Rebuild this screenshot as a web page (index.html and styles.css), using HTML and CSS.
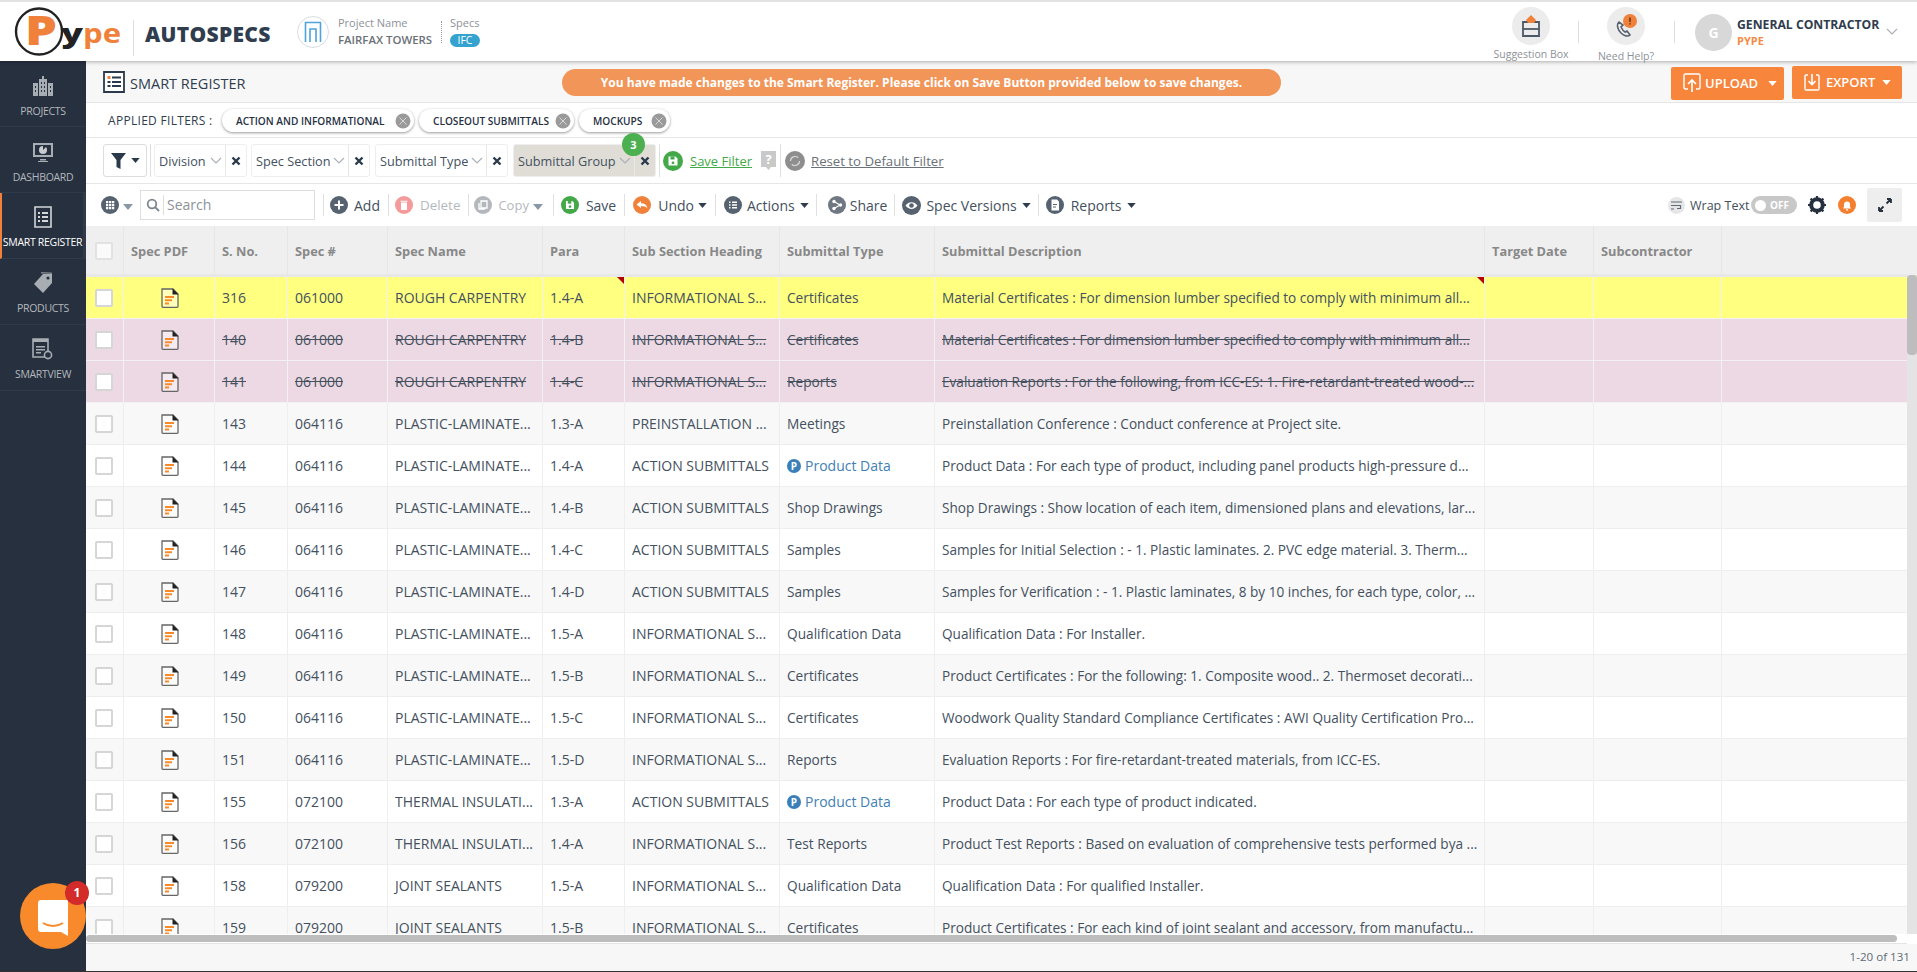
FILE: index.html
```html
<!DOCTYPE html>
<html lang="en">
<head>
<meta charset="utf-8">
<title>Smart Register</title>
<link rel="stylesheet" href="styles.css">
</head>
<body>
<svg class="defs" width="0" height="0" aria-hidden="true">
  <symbol id="pdf" viewBox="0 0 18 20">
    <path d="M1 1h11l5 5v12.5a.8.8 0 0 1-.8.8H1.800a.8.8 0 0 1-.8-.8z" fill="#ffffff" fill-opacity=".45" stroke="#666" stroke-width="1.300"/>
    <path d="M11.500 .5l6 6h-6z" fill="#222"/>
    <path d="M4 8h9v2H4zM4 11.200h7v2H4zM4 14.400h4v2H4z" fill="#f98a2c"/>
  </symbol>
  <symbol id="caret" viewBox="0 0 10 6"><path d="M0 0h10L5 6z"/></symbol>
  <symbol id="chev" viewBox="0 0 12 7"><path d="M1 1l5 5 5-5" fill="none" stroke="#aab0b8" stroke-width="1.200"/></symbol>
  <symbol id="xmark" viewBox="0 0 10 10"><path d="M1.500 1.500l7 7M8.500 1.500l-7 7" stroke="#2b3a4a" stroke-width="2.400"/></symbol>
  <symbol id="chipx" viewBox="0 0 16 16"><circle cx="8" cy="8" r="7.500" fill="#9a9a9a"/><path d="M4.500 4.500l7 7M11.500 4.500l-7 7" stroke="#d8d8d8" stroke-width="1"/></symbol>
  <symbol id="disk" viewBox="0 0 20 20"><circle cx="10" cy="10" r="10" fill="#43a848"/><path d="M5.500 5.500h7l2 2v7h-9z" fill="#fff"/><path d="M7.500 5.500h4v3h-4z" fill="#43a848"/><circle cx="10" cy="11.800" r="1.400" fill="#43a848"/></symbol>
</svg>

<header class="topbar">
  <svg class="logo" width="124" height="56" viewBox="0 0 124 56">
    <circle cx="39" cy="29.500" r="23" fill="#fff" stroke="#222" stroke-width="2.400"/>
    <text class="logo-p" x="25" y="43" textLength="32" lengthAdjust="spacingAndGlyphs">P</text>
    <text class="logo-y" x="61" y="41" textLength="22" lengthAdjust="spacingAndGlyphs">y</text>
    <text class="logo-pe" x="83" y="41" textLength="38" lengthAdjust="spacingAndGlyphs">pe</text>
  </svg>
  <span class="vline logo-sep"></span>
  <span class="brand">AUTOSPECS</span>
  <span class="proj-ico">
    <svg width="18" height="22" viewBox="0 0 18 22"><path d="M1.500 21V1.500h15V21" fill="none" stroke="#4fa3d9" stroke-width="1.600"/><path d="M6 21V8h6v13" fill="none" stroke="#4fa3d9" stroke-width="1.600"/></svg>
  </span>
  <div class="proj">
    <span class="proj-l">Project Name</span>
    <span class="proj-v">FAIRFAX TOWERS</span>
  </div>
  <span class="dotsep"></span>
  <div class="specs">
    <span class="proj-l">Specs</span>
    <span class="ifc">IFC</span>
  </div>
  <div class="top-right">
    <div class="tool tool-s">
      <span class="tool-ico">
        <svg width="22" height="24" viewBox="0 0 22 24"><path d="M3 8h16v14H3z" fill="none" stroke="#4c5866" stroke-width="1.800"/><path d="M3 15h16" stroke="#4c5866" stroke-width="1.800"/><path d="M11 1l5 5-2 3H8L6 6z" fill="#f0813a"/></svg>
      </span>
      <span class="tool-l">Suggestion Box</span>
    </div>
    <span class="vline tool-sep1"></span>
    <div class="tool tool-h">
      <span class="tool-ico">
        <svg width="26" height="26" viewBox="0 0 26 26"><path d="M6 9c-3 3-1 8 2 11s7 4 9 2l-3-4-2 1c-2-1-3-3-4-5l2-2z" fill="none" stroke="#566270" stroke-width="1.600"/><circle cx="17" cy="8" r="7" fill="#f0813a"/><path d="M17 4.500v4.500M17 10.300v1.200" stroke="#5b3418" stroke-width="1.500"/></svg>
      </span>
      <span class="tool-l tool-l2">Need Help?</span>
    </div>
    <span class="vline tool-sep2"></span>
    <span class="avatar">G</span>
    <div class="user">
      <span class="user-n">GENERAL CONTRACTOR</span>
      <span class="user-o">PYPE</span>
    </div>
    <svg class="user-chev" width="12" height="7"><use href="#chev"/></svg>
  </div>
</header>

<div class="shell">
  <nav class="side">
    <a class="nav nav-up">
      <svg width="22" height="22" viewBox="0 0 22 22"><path d="M7 4h8v17H7zM1 8h5v13H1zM16 8h5v13h-5zM10 1h2v3h-2z" fill="#a8adb3"/><path d="M9 7h1v2H9zM12 7h1v2h-1zM9 11h1v2H9zM12 11h1v2h-1zM9 15h1v2H9zM12 15h1v2h-1zM3 11h1v2H3zM3 15h1v2H3zM18 11h1v2h-1zM18 15h1v2h-1z" fill="#26303f"/></svg>
      <span>PROJECTS</span>
    </a>
    <a class="nav nav-up">
      <svg width="22" height="22" viewBox="0 0 22 22"><path d="M1 2h20v14H1z" fill="#a8adb3"/><path d="M3 4h16v10H3z" fill="#26303f"/><path d="M8 18h6v1.500H8zM6 20h10v1H6z" fill="#a8adb3"/><circle cx="11" cy="9" r="4" fill="#c8ccd0"/><path d="M11 9V5h4z" fill="#26303f"/></svg>
      <span>DASHBOARD</span>
    </a>
    <a class="nav nav-on">
      <svg width="18" height="22" viewBox="0 0 18 22"><path d="M1 1h16v20H1z" fill="none" stroke="#d4d6d9" stroke-width="1.600"/><path d="M4 6h2v2H4zM8 6h6v2H8zM4 10h2v2H4zM8 10h6v2H8zM4 14h2v2H4zM8 14h6v2H8z" fill="#d4d6d9"/></svg>
      <span>SMART REGISTER</span>
    </a>
    <a class="nav">
      <svg width="22" height="22" viewBox="0 0 22 22"><path d="M11 2h9v9l-9 10-9-9z" fill="#a8adb3"/><path d="M9 .8l11 .4" stroke="#a8adb3"/><circle cx="16" cy="6" r="1.600" fill="#26303f"/></svg>
      <span>PRODUCTS</span>
    </a>
    <a class="nav">
      <svg width="22" height="22" viewBox="0 0 22 22"><path d="M1 1h15v18H1z" fill="none" stroke="#a8adb3" stroke-width="1.600"/><path d="M1 1h15v3H1z" fill="#a8adb3"/><path d="M4 8h9v1.400H4zM4 11h9v1.400H4zM4 14h5v1.400H4z" fill="#a8adb3"/><circle cx="16" cy="17" r="3.600" fill="#26303f" stroke="#a8adb3" stroke-width="1.600"/></svg>
      <span>SMARTVIEW</span>
    </a>
  </nav>

  <main class="main">
    <div class="titlebar">
      <svg class="title-ico" width="22" height="22" viewBox="0 0 22 22"><path d="M1 1h20v20H1z" fill="#fff" stroke="#2b3a4a" stroke-width="1.800"/><path d="M4.500 5h3v3h-3z" fill="#f0813a"/><path d="M4.500 10h3v2h-3zM4.500 14h3v2h-3zM9 5.500h9v2H9zM9 10h9v2H9zM9 14h9v2H9z" fill="#2b3a4a"/></svg>
      <span class="title">SMART REGISTER</span>
      <div class="banner">You have made changes to the Smart Register. Please click on Save Button provided below to save changes.</div>
      <button class="obtn obtn-u">
        <svg width="18" height="20" viewBox="0 0 18 20"><path d="M5 16H2.500A1.500 1.500 0 0 1 1 14.500v-12A1.500 1.500 0 0 1 2.500 1h13A1.500 1.500 0 0 1 17 2.500v12a1.500 1.500 0 0 1-1.500 1.500H13" fill="none" stroke="#fff" stroke-width="1.400"/><path d="M9 19V7M5 11l4-4 4 4" fill="none" stroke="#fff" stroke-width="1.600"/></svg>
        UPLOAD
        <svg class="obtn-c" width="9" height="5"><use href="#caret"/></svg>
      </button>
      <button class="obtn obtn-e">
        <svg width="16" height="18" viewBox="0 0 16 18"><path d="M4 2H2.200A1.200 1.200 0 0 0 1 3.200v12.600A1.200 1.200 0 0 0 2.200 17h11.600a1.200 1.200 0 0 0 1.200-1.200V3.200A1.200 1.200 0 0 0 13.800 2H12" fill="none" stroke="#fff" stroke-width="1.400"/><path d="M8 1v10M4.500 8L8 11.500 11.500 8" fill="none" stroke="#fff" stroke-width="1.600"/></svg>
        EXPORT
        <svg class="obtn-c" width="9" height="5"><use href="#caret"/></svg>
      </button>
    </div>

    <div class="applied">
      <span class="applied-l">APPLIED FILTERS :</span>
      <span class="chip chip-1">ACTION AND INFORMATIONAL<svg width="16" height="16"><use href="#chipx"/></svg></span>
      <span class="chip chip-2">CLOSEOUT SUBMITTALS<svg width="16" height="16"><use href="#chipx"/></svg></span>
      <span class="chip chip-3">MOCKUPS<svg width="16" height="16"><use href="#chipx"/></svg></span>
    </div>

    <div class="filters">
      <button class="funnel">
        <svg width="15" height="16" viewBox="0 0 15 16"><path d="M0 0h15L9.500 7v9l-4-2V7z" fill="#2b3a4a"/></svg>
        <svg class="funnel-c" width="9" height="5"><use href="#caret"/></svg>
      </button>
      <span class="vline fsep"></span>
      <div class="fgroup fg-div"><span class="fname">Division<svg width="12" height="7"><use href="#chev"/></svg></span><span class="fx"><svg width="10" height="10"><use href="#xmark"/></svg></span></div>
      <div class="fgroup fg-sec"><span class="fname">Spec Section<svg width="12" height="7"><use href="#chev"/></svg></span><span class="fx"><svg width="10" height="10"><use href="#xmark"/></svg></span></div>
      <div class="fgroup fg-typ"><span class="fname">Submittal Type<svg width="12" height="7"><use href="#chev"/></svg></span><span class="fx"><svg width="10" height="10"><use href="#xmark"/></svg></span></div>
      <div class="fgroup fg-grp fg-on"><span class="fname">Submittal Group<svg width="12" height="7"><use href="#chev"/></svg></span><span class="fx"><svg width="10" height="10"><use href="#xmark"/></svg></span><span class="fbadge">3</span></div>
      <span class="vline fsep2"></span>
      <svg class="fi-save" width="20" height="20"><use href="#disk"/></svg>
      <a class="link-save">Save Filter</a>
      <svg class="fi-help" width="15" height="20" viewBox="0 0 15 20"><path d="M0 0h15v16H10l-2.500 3L5 16H0z" fill="#c9c9c9"/><text class="help-q" x="7.500" y="12.500">?</text></svg>
      <span class="vline fsep3"></span>
      <svg class="fi-reset" width="20" height="20" viewBox="0 0 20 20"><circle cx="10" cy="10" r="10" fill="#8e8e8e"/><path d="M5.500 10a4.500 4.500 0 0 1 7.700-3.200M14.500 10a4.500 4.500 0 0 1-7.700 3.200" fill="none" stroke="#d4d4d4" stroke-width="1.300"/></svg>
      <a class="link-reset">Reset to Default Filter</a>
    </div>

    <div class="toolbar">
      <svg class="t-grid" width="18" height="18" viewBox="0 0 18 18"><circle cx="9" cy="9" r="9" fill="#566270"/><path d="M5 5h2.300v2.300H5zM8 5h2.300v2.300H8zM11 5h2.300v2.300H11zM5 8h2.300v2.300H5zM8 8h2.300v2.300H8zM11 8h2.300v2.300H11zM5 11h2.300v2.300H5zM8 11h2.300v2.300H8zM11 11h2.300v2.300H11z" fill="#fff"/></svg>
      <svg class="t-caret t-grid-c" width="10" height="6"><use href="#caret"/></svg>
      <div class="search">
        <svg width="14" height="14" viewBox="0 0 14 14"><circle cx="6" cy="6" r="4.300" fill="none" stroke="#7d8792" stroke-width="1.800"/><path d="M9 9l4 4" stroke="#7d8792" stroke-width="1.800"/></svg>
        <span class="search-t">Search</span>
      </div>
      <span class="tsep ts1"></span>
      <svg class="ti" width="18" height="18" viewBox="0 0 18 18"><circle cx="9" cy="9" r="9" fill="#566270"/><path d="M9 4.500v9M4.500 9h9" stroke="#fff" stroke-width="2"/></svg>
      <span class="tt t-add">Add</span>
      <span class="tsep ts2"></span>
      <svg class="ti" width="18" height="18" viewBox="0 0 18 18"><circle cx="9" cy="9" r="9" fill="#f59a9a"/><path d="M6 6.500h6V14H6zM5.500 4.700h7v1h-7z" fill="#fff"/></svg>
      <span class="tt tt-off t-del">Delete</span>
      <span class="tsep ts3"></span>
      <svg class="ti" width="18" height="18" viewBox="0 0 18 18"><circle cx="9" cy="9" r="9" fill="#b4b8bd"/><path d="M7 5h6v7H7z" fill="none" stroke="#fff" stroke-width="1.300"/><path d="M5 7v6h6" fill="none" stroke="#fff" stroke-width="1.300"/></svg>
      <span class="tt tt-off t-copy">Copy</span>
      <svg class="t-caret t-copy-c" width="10" height="6"><use href="#caret"/></svg>
      <span class="tsep ts4"></span>
      <svg class="ti" width="18" height="18"><use href="#disk"/></svg>
      <span class="tt t-save">Save</span>
      <span class="tsep ts5"></span>
      <svg class="ti" width="18" height="18" viewBox="0 0 18 18"><circle cx="9" cy="9" r="9" fill="#f0813a"/><path d="M3.500 8.500L8 5v2.300c3.500 0 6 1.700 6.500 5.200-1.500-2-3.500-2.600-6.500-2.600V12z" fill="#fff"/></svg>
      <span class="tt t-undo">Undo</span>
      <svg class="t-caret-d t-cu" width="9" height="5"><use href="#caret"/></svg>
      <span class="tsep ts6"></span>
      <svg class="ti" width="18" height="18" viewBox="0 0 18 18"><circle cx="9" cy="9" r="9" fill="#566270"/><path d="M5 5.500h1.500V7H5zM5 8.300h1.500v1.500H5zM5 11h1.500v1.500H5zM8 5.500h5V7H8zM8 8.300h5v1.500H8zM8 11h5v1.500H8z" fill="#fff"/></svg>
      <span class="tt t-act">Actions</span>
      <svg class="t-caret-d" width="9" height="5"><use href="#caret"/></svg>
      <span class="tsep ts7"></span>
      <svg class="ti" width="18" height="18" viewBox="0 0 18 18"><circle cx="9" cy="9" r="9" fill="#6f7782"/><path d="M6 5.500l6 3.500-6 3.500" fill="none" stroke="#fff" stroke-width="1.200"/><circle cx="6" cy="5.500" r="1.700" fill="#fff"/><circle cx="12.500" cy="9" r="1.700" fill="#fff"/><circle cx="6" cy="12.500" r="1.700" fill="#fff"/></svg>
      <span class="tt t-share">Share</span>
      <span class="tsep ts8"></span>
      <svg class="ti" width="19" height="19" viewBox="0 0 19 19"><circle cx="9.500" cy="9.500" r="9.500" fill="#566270"/><path d="M3.500 9.500c3-4.500 9-4.500 12 0-3 4.500-9 4.500-12 0z" fill="#fff"/><circle cx="9.500" cy="9.500" r="2.300" fill="#566270"/></svg>
      <span class="tt t-ver">Spec Versions</span>
      <svg class="t-caret-d" width="9" height="5"><use href="#caret"/></svg>
      <span class="tsep ts9"></span>
      <svg class="ti" width="18" height="18" viewBox="0 0 18 18"><circle cx="9" cy="9" r="9" fill="#566270"/><path d="M5.500 3.500H11l2 2v9H5.500z" fill="#fff"/><path d="M7 8h4v1H7zM7 10.500h3v1H7z" fill="#566270"/></svg>
      <span class="tt t-rep">Reports</span>
      <svg class="t-caret-d" width="9" height="5"><use href="#caret"/></svg>

      <div class="t-right">
        <span class="wrap-ico"><svg width="11" height="9" viewBox="0 0 11 9"><path d="M0 1h11M0 4.500h9.500v3H6M0 8h3" fill="none" stroke="#5f6a76" stroke-width="1.200"/></svg></span>
        <span class="wrap-t">Wrap Text</span>
        <span class="toggle"><span class="knob"></span>OFF</span>
        <svg class="gear" width="18" height="18" viewBox="0 0 18 18"><circle cx="9" cy="9" r="5.800" fill="#fff" stroke="#26303f" stroke-width="4"/><path d="M9 0v3M9 15v3M0 9h3M15 9h3M2.600 2.600l2.200 2.200M13.200 13.200l2.200 2.200M15.400 2.600l-2.200 2.200M4.800 13.200l-2.200 2.200" stroke="#26303f" stroke-width="2.200"/></svg>
        <svg class="bell" width="18" height="18" viewBox="0 0 18 18"><circle cx="9" cy="9" r="9" fill="#f47f2e"/><path d="M5 12.500c1-1 1-2.500 1-4a3 3 0 0 1 6 0c0 1.500 0 3 1 4zM8 13.300h2v1.200H8z" fill="#fff"/></svg>
        <span class="expand"><svg width="14" height="14" viewBox="0 0 14 14"><path d="M8.500 5.500L13 1M13 1H9M13 1v4M5.500 8.500L1 13M1 13h4M1 13V9" fill="none" stroke="#26303f" stroke-width="1.800"/></svg></span>
      </div>
    </div>

    <div class="grid-area">
      <div class="grid-col">
        <div class="grid-clip">
          <table class="grid">
            <colgroup>
              <col class="c-chk"><col class="c-pdf"><col class="c-sno"><col class="c-num"><col class="c-name"><col class="c-para"><col class="c-head"><col class="c-type"><col class="c-desc"><col class="c-date"><col class="c-sub"><col>
            </colgroup>
            <thead>
              <tr><th><span class="chk chk-h"></span></th><th>Spec PDF</th><th>S. No.</th><th>Spec #</th><th>Spec Name</th><th>Para</th><th>Sub Section Heading</th><th>Submittal Type</th><th>Submittal Description</th><th>Target Date</th><th>Subcontractor</th><th></th></tr>
            </thead>
            <tbody>
              <tr class="r-y"><td><span class="chk"></span></td><td class="pdf"><svg width="18" height="20"><use href="#pdf"/></svg></td><td>316</td><td>061000</td><td>ROUGH CARPENTRY</td><td class="flag">1.4-A<i class="tri"></i></td><td>INFORMATIONAL S...</td><td class="ty">Certificates</td><td class="ds">Material Certificates : For dimension lumber specified to comply with minimum all...<i class="tri"></i></td><td></td><td></td><td></td></tr>
              <tr class="r-x"><td><span class="chk"></span></td><td class="pdf"><svg width="18" height="20"><use href="#pdf"/></svg></td><td>140</td><td>061000</td><td>ROUGH CARPENTRY</td><td>1.4-B</td><td>INFORMATIONAL S...</td><td class="ty">Certificates</td><td class="ds">Material Certificates : For dimension lumber specified to comply with minimum all...</td><td></td><td></td><td></td></tr>
              <tr class="r-x"><td><span class="chk"></span></td><td class="pdf"><svg width="18" height="20"><use href="#pdf"/></svg></td><td>141</td><td>061000</td><td>ROUGH CARPENTRY</td><td>1.4-C</td><td>INFORMATIONAL S...</td><td class="ty">Reports</td><td class="ds">Evaluation Reports : For the following, from ICC-ES: 1. Fire-retardant-treated wood-...</td><td></td><td></td><td></td></tr>
              <tr class="r-g"><td><span class="chk"></span></td><td class="pdf"><svg width="18" height="20"><use href="#pdf"/></svg></td><td>143</td><td>064116</td><td>PLASTIC-LAMINATE...</td><td>1.3-A</td><td>PREINSTALLATION ...</td><td class="ty">Meetings</td><td class="ds">Preinstallation Conference : Conduct conference at Project site.</td><td></td><td></td><td></td></tr>
              <tr><td><span class="chk"></span></td><td class="pdf"><svg width="18" height="20"><use href="#pdf"/></svg></td><td>144</td><td>064116</td><td>PLASTIC-LAMINATE...</td><td>1.4-A</td><td>ACTION SUBMITTALS</td><td class="prod"><span class="p-ico">P</span>Product Data</td><td class="ds">Product Data : For each type of product, including panel products high-pressure d...</td><td></td><td></td><td></td></tr>
              <tr class="r-g"><td><span class="chk"></span></td><td class="pdf"><svg width="18" height="20"><use href="#pdf"/></svg></td><td>145</td><td>064116</td><td>PLASTIC-LAMINATE...</td><td>1.4-B</td><td>ACTION SUBMITTALS</td><td class="ty">Shop Drawings</td><td class="ds">Shop Drawings : Show location of each item, dimensioned plans and elevations, lar...</td><td></td><td></td><td></td></tr>
              <tr><td><span class="chk"></span></td><td class="pdf"><svg width="18" height="20"><use href="#pdf"/></svg></td><td>146</td><td>064116</td><td>PLASTIC-LAMINATE...</td><td>1.4-C</td><td>ACTION SUBMITTALS</td><td class="ty">Samples</td><td class="ds">Samples for Initial Selection : - 1. Plastic laminates. 2. PVC edge material. 3. Therm...</td><td></td><td></td><td></td></tr>
              <tr class="r-g"><td><span class="chk"></span></td><td class="pdf"><svg width="18" height="20"><use href="#pdf"/></svg></td><td>147</td><td>064116</td><td>PLASTIC-LAMINATE...</td><td>1.4-D</td><td>ACTION SUBMITTALS</td><td class="ty">Samples</td><td class="ds">Samples for Verification : - 1. Plastic laminates, 8 by 10 inches, for each type, color, ...</td><td></td><td></td><td></td></tr>
              <tr><td><span class="chk"></span></td><td class="pdf"><svg width="18" height="20"><use href="#pdf"/></svg></td><td>148</td><td>064116</td><td>PLASTIC-LAMINATE...</td><td>1.5-A</td><td>INFORMATIONAL S...</td><td class="ty">Qualification Data</td><td class="ds">Qualification Data : For Installer.</td><td></td><td></td><td></td></tr>
              <tr class="r-g"><td><span class="chk"></span></td><td class="pdf"><svg width="18" height="20"><use href="#pdf"/></svg></td><td>149</td><td>064116</td><td>PLASTIC-LAMINATE...</td><td>1.5-B</td><td>INFORMATIONAL S...</td><td class="ty">Certificates</td><td class="ds">Product Certificates : For the following: 1. Composite wood.. 2. Thermoset decorati...</td><td></td><td></td><td></td></tr>
              <tr><td><span class="chk"></span></td><td class="pdf"><svg width="18" height="20"><use href="#pdf"/></svg></td><td>150</td><td>064116</td><td>PLASTIC-LAMINATE...</td><td>1.5-C</td><td>INFORMATIONAL S...</td><td class="ty">Certificates</td><td class="ds">Woodwork Quality Standard Compliance Certificates : AWI Quality Certification Pro...</td><td></td><td></td><td></td></tr>
              <tr class="r-g"><td><span class="chk"></span></td><td class="pdf"><svg width="18" height="20"><use href="#pdf"/></svg></td><td>151</td><td>064116</td><td>PLASTIC-LAMINATE...</td><td>1.5-D</td><td>INFORMATIONAL S...</td><td class="ty">Reports</td><td class="ds">Evaluation Reports : For fire-retardant-treated materials, from ICC-ES.</td><td></td><td></td><td></td></tr>
              <tr><td><span class="chk"></span></td><td class="pdf"><svg width="18" height="20"><use href="#pdf"/></svg></td><td>155</td><td>072100</td><td>THERMAL INSULATI...</td><td>1.3-A</td><td>ACTION SUBMITTALS</td><td class="prod"><span class="p-ico">P</span>Product Data</td><td class="ds">Product Data : For each type of product indicated.</td><td></td><td></td><td></td></tr>
              <tr class="r-g"><td><span class="chk"></span></td><td class="pdf"><svg width="18" height="20"><use href="#pdf"/></svg></td><td>156</td><td>072100</td><td>THERMAL INSULATI...</td><td>1.4-A</td><td>INFORMATIONAL S...</td><td class="ty">Test Reports</td><td class="ds">Product Test Reports : Based on evaluation of comprehensive tests performed bya ...</td><td></td><td></td><td></td></tr>
              <tr><td><span class="chk"></span></td><td class="pdf"><svg width="18" height="20"><use href="#pdf"/></svg></td><td>158</td><td>079200</td><td>JOINT SEALANTS</td><td>1.5-A</td><td>INFORMATIONAL S...</td><td class="ty">Qualification Data</td><td class="ds">Qualification Data : For qualified Installer.</td><td></td><td></td><td></td></tr>
              <tr class="r-g"><td><span class="chk"></span></td><td class="pdf"><svg width="18" height="20"><use href="#pdf"/></svg></td><td>159</td><td>079200</td><td>JOINT SEALANTS</td><td>1.5-B</td><td>INFORMATIONAL S...</td><td class="ty">Certificates</td><td class="ds">Product Certificates : For each kind of joint sealant and accessory, from manufactu...</td><td></td><td></td><td></td></tr>
            </tbody>
          </table>
        </div>
        <div class="hscroll"><span class="hthumb"></span></div>
      </div>
      <div class="vscroll"><span class="vhead"></span><span class="vthumb"></span></div>
    </div>

    <footer class="footer">1-20 of 131</footer>
  </main>
</div>

<div class="chat">
  <svg width="30" height="36" viewBox="0 0 30 36"><path d="M3 0h27v36l-7-4H3a3 3 0 0 1-3-3V3a3 3 0 0 1 3-3z" fill="#fff"/><path d="M5 23c6 4 14 4 20 0" fill="none" stroke="#f98a2c" stroke-width="2"/></svg>
  <span class="chat-b">1</span>
</div>
</body>
</html>
```

FILE: styles.css
```css
* { box-sizing: border-box; }
html, body { margin: 0; height: 972px; overflow: hidden; }
body {
  display: flex;
  flex-direction: column;
  position: relative;
  background: #fff;
  font-family: "Open Sans", "Liberation Sans", sans-serif;
  color: #44505e;
  border-bottom: 1px solid #333;
}
.defs { position: absolute; }
button { font-family: inherit; border: 0; padding: 0; }
svg { display: block; flex: none; }

/* top bar */
.topbar {
  height: 61px;
  flex: none;
  display: flex;
  align-items: center;
  border-top: 2px solid #e2e2e2;
  background: #fff;
  box-shadow: 0 1px 4px rgba(0,0,0,.3);
  position: relative;
  z-index: 2;
}
.logo { align-self: flex-start; }
.logo-p { font: 800 40px "Open Sans", sans-serif; fill: #f0813a; }
.logo-y { font: 800 26px "Open Sans", sans-serif; fill: #222; }
.logo-pe { font: 700 26px "Open Sans", sans-serif; fill: #f0813a; }
.vline { display: block; width: 1px; background: #dedede; flex: none; }
.logo-sep { height: 36px; margin-left: 9px; margin-top: 12px; }
.brand { font-size: 21px; font-weight: 800; color: #2f3d4e; margin: 5px 0 0 11px; width: 152px; letter-spacing: .3px; }
.proj-ico {
  width: 32px; height: 32px; border-radius: 50%; border: 1px solid #d8dde2;
  display: flex; align-items: center; justify-content: center; flex: none;
}
.proj { display: flex; flex-direction: column; margin-left: 9px; width: 103px; }
.proj-l { font-size: 11px; color: #8d9298; line-height: 16px; }
.proj-v { font-size: 11.400px; font-weight: 600; color: #6b7178; line-height: 18px; }
.dotsep { width: 0; height: 22px; border-left: 1px dotted #999; }
.specs { display: flex; flex-direction: column; margin: -1px 0 0 8px; }
.ifc {
  width: 30px; height: 13px; border-radius: 7px; background: #35a3cf; color: #fff;
  font-size: 10.500px; line-height: 13px; text-align: center; margin-top: 3px;
}
.top-right { margin-left: auto; display: flex; align-items: center; height: 100%; padding-right: 19px; }
.tool { position: relative; width: 38px; height: 100%; flex: none; }
.tool-ico {
  position: absolute; left: 0; top: 5px; width: 38px; height: 38px; border-radius: 50%;
  background: #ececec; display: flex; align-items: center; justify-content: center;
}
.tool-l { position: absolute; top: 45px; left: 50%; transform: translateX(-50%); font-size: 10.500px; color: #8d9298; white-space: nowrap; line-height: 14px; }
.tool-l2 { top: 47px; }
.tool-sep1 { height: 22px; margin: 0 28px 0 28px; }
.tool-sep2 { height: 22px; margin: 0 20px 0 29px; }
.avatar {
  width: 37px; height: 37px; border-radius: 50%; background: #d8d8d8; color: #fff;
  display: flex; align-items: center; justify-content: center; font-weight: 700; font-size: 14px; margin-top: 2px;
}
.user { display: flex; flex-direction: column; margin-left: 5px; width: 152px; }
.user-n { font-size: 12.200px; font-weight: 700; color: #2f3d4e; line-height: 17px; white-space: nowrap; }
.user-o { font-size: 11px; font-weight: 700; color: #f58a44; line-height: 15px; }
.user-chev { margin-left: -3px; }

/* shell */
.shell { flex: 1; display: flex; min-height: 0; }
.side { width: 86px; flex: none; background: #26303f; display: flex; flex-direction: column; }
.nav {
  height: 66px; flex: none; display: flex; flex-direction: column; align-items: center; justify-content: flex-end;
  gap: 7px; padding-bottom: 9px; font-size: 10.500px; letter-spacing: -.3px; color: #b4b8bd;
  border-bottom: 1px solid #2f3b4b;
}
.nav-up { padding-bottom: 8px; }
.nav-on { border-left: 2px solid #f0813a; color: #fff; border-right: 3px solid #2f3b4b; white-space: nowrap; }
.main { flex: 1; min-width: 0; display: flex; flex-direction: column; }

/* title */
.titlebar {
  height: 42px; flex: none; display: flex; align-items: center; background: #f7f7f7;
  border-bottom: 1px solid #e6e6e6; padding-left: 17px; position: relative;
}
.title-ico { margin-top: 1px; }
.title { font-size: 14.500px; color: #2f3d4e; margin: 3px 0 0 5px; width: 432px; white-space: nowrap; }
.banner {
  width: 719px; height: 27px; border-radius: 14px; background: #f19559; color: #fff; flex: none;
  font-size: 12px; font-weight: 700; line-height: 27px; text-align: center; margin-top: 1px;
}
.obtn {
  display: flex; align-items: center; background: #f8853c; color: #fff; border-radius: 2px;
  font-size: 13px; font-weight: 600; height: 33px; flex: none;
}
.obtn-u { width: 113px; margin: 3px 0 0 390px; padding-left: 12px; gap: 4px; }
.obtn-e { width: 110px; margin: 1px 0 0 8px; padding-left: 12px; gap: 6px; }
.obtn-u .obtn-c { margin-left: 6px; }
.obtn-c { fill: #fff; margin-left: 1px; }

/* applied filters */
.applied {
  height: 35px; flex: none; display: flex; align-items: center; border-bottom: 1px solid #e6e6e6; padding: 1px 0 0 22px;
}
.applied-l { font-size: 12px; color: #2f3d4e; width: 114px; letter-spacing: .3px; white-space: nowrap; }
.chip {
  height: 23px; border-radius: 12px; background: #fff; box-shadow: 0 1px 3px rgba(0,0,0,.4);
  display: flex; align-items: center; justify-content: space-between; padding: 0 3px 0 14px;
  font-size: 10.100px; font-weight: 600; color: #26303f; white-space: nowrap; flex: none;
}
.chip-1 { width: 192px; margin-right: 5px; }
.chip-2 { width: 155px; margin-right: 5px; }
.chip-3 { width: 91px; }

/* filter bar */
.filters {
  height: 46px; flex: none; display: flex; align-items: center; border-bottom: 1px solid #e6e6e6; padding-left: 17px; font-size: 12.700px; color: #44505e;
}
.funnel {
  width: 44px; height: 33px; border: 1px solid #ddd; border-radius: 3px; background: #fff;
  display: flex; align-items: center; justify-content: center; gap: 5px;
}
.funnel-c { fill: #2b3a4a; }
.fsep { height: 33px; margin: 0 3px; }
.fgroup { position: relative; display: flex; height: 33px; border: 1px solid #eee; border-radius: 3px; flex: none; margin-right: 5px; }
.fg-div { width: 93px; margin-right: 4px; }
.fg-sec { width: 119px; }
.fg-typ { width: 133px; }
.fg-grp { width: 143px; margin-right: 3px; }
.fg-on { background: #e0ddd7; }
.fname {
  flex: 1; display: flex; align-items: center; justify-content: space-between; padding: 0 3px 0 4px;
  border-right: 1px solid #e8e8e8; white-space: nowrap;
}
.fx { width: 20px; flex: none; display: flex; align-items: center; justify-content: center; }
.fbadge {
  position: absolute; top: -12px; right: 10px; width: 23px; height: 23px; border-radius: 50%;
  background: #4caf50; color: #fff; font-size: 11px; font-weight: 700; line-height: 23px; text-align: center;
}
.fsep2 { height: 33px; margin-right: 3px; }
.link-save { color: #43a848; text-decoration: underline; margin-left: 7px; width: 71px; white-space: nowrap; font-size: 13px; }
.help-q { font-size: 13px; font-weight: 700; fill: #fff; text-anchor: middle; }
.fsep3 { height: 33px; margin: 0 4px; }
.link-reset { color: #6b7178; text-decoration: underline; margin-left: 6px; white-space: nowrap; font-size: 13.200px; }

/* toolbar */
.toolbar { height: 42px; flex: none; display: flex; align-items: center; padding-left: 15px; font-size: 14px; }
.t-caret { fill: #8a97a8; margin-top: 4px; }
.t-grid-c { margin: 4px 7px 0 4px; }
.t-copy-c { margin-left: 4px; }
.t-caret-d { fill: #2f3d4e; margin-left: 5px; }
.t-cu { margin-left: 4px; }
.search {
  width: 175px; height: 30px; border: 1px solid #dedede; display: flex; align-items: center; padding-left: 5px; flex: none;
}
.search-t { color: #8d9298; margin-left: 3px; padding-left: 3px; border-left: 1px solid #ddd; line-height: 20px; }
.tsep { display: block; width: 1px; height: 22px; background: #e0e0e0; flex: none; }
.ts1 { margin: 0 6px 0 8px; }
.ts2 { margin: 0 6px 0 8px; }
.ts3 { margin: 0 5px 0 8px; }
.ts4 { margin: 0 7px 0 10px; }
.ts5 { margin: 0 8px 0 8px; }
.ts6 { margin: 0 8px 0 8px; }
.ts7 { margin: 0 11px 0 7px; }
.ts8 { margin: 0 7px 0 7px; }
.ts9 { margin: 0 7px 0 7px; }
.tt { white-space: nowrap; color: #44505e; margin-left: 6px; }
.tt-off { color: #b4b8bd; }
.t-del { font-size: 13.400px; margin-left: 7px; }
.t-copy { font-size: 13px; }
.t-save { margin-left: 7px; }
.t-undo { margin-left: 7px; }
.t-act { margin-left: 5px; }
.t-share { margin-left: 4px; }
.t-ver { margin-left: 5px; }
.t-rep { margin-left: 7px; }
.t-right { margin-left: auto; display: flex; align-items: center; padding-right: 15px; }
.wrap-ico { width: 17px; height: 17px; border-radius: 50%; background: #e6e6e6; display: flex; align-items: center; justify-content: center; }
.wrap-t { font-size: 12.500px; margin-left: 5px; width: 61px; white-space: nowrap; }
.toggle {
  width: 46px; height: 18px; border-radius: 9px; background: #c8c8c8; color: #fff;
  font-size: 10px; font-weight: 700; display: flex; align-items: center; gap: 4px; padding-left: 4px;
}
.knob { width: 11px; height: 11px; border-radius: 50%; background: #fff; }
.gear { margin-left: 11px; }
.bell { margin-left: 12px; }
.expand { width: 35px; height: 34px; background: #eee; border-radius: 2px; margin-left: 11px; display: flex; align-items: center; justify-content: center; }

/* grid */
.grid-area { flex: 1; min-height: 0; display: flex; }
.grid-col { flex: 1; min-width: 0; display: flex; flex-direction: column; }
.grid-clip { flex: 1; min-height: 0; overflow: hidden; }
.grid { width: 1821px; table-layout: fixed; border-collapse: separate; border-spacing: 0; font-size: 14px; }
.c-chk { width: 38px; }
.c-pdf { width: 91px; }
.c-sno { width: 73px; }
.c-num { width: 100px; }
.c-name { width: 155px; }
.c-para { width: 82px; }
.c-head { width: 155px; }
.c-type { width: 155px; }
.c-desc { width: 550px; }
.c-date { width: 109px; }
.c-sub { width: 128px; }
.grid th {
  height: 51px; background: #efefef; font-size: 12.800px; font-weight: 700; color: #888; text-align: left;
  padding: 1px 7px 0; border-right: 1px solid #e6e6e6; border-bottom: 3px solid #e8e8e8; white-space: nowrap;
}
.grid th:last-child, .grid td:last-child { border-right: 0; }
.grid td {
  height: 42px; padding: 0 7px; border-right: 1px solid #eee; border-bottom: 1px solid #eee;
  white-space: nowrap; overflow: hidden; background: #fff; position: relative;
}
.grid .ds { font-size: 13.600px; }
.grid .ty { font-size: 13.700px; }
.r-g td { background: #f8f8f8; }
.r-y td { background: #ffff80; }
.r-x td { background: #ecd9e3; text-decoration: line-through; }
.r-y td, .r-x td { border-color: #f2f2f2; }
.chk { display: block; width: 18px; height: 18px; border: 2px solid #d6d6d6; background: #fff; border-radius: 2px; margin-left: 2px; }
.chk-h { background: #fafafa; border-color: #e2e2e2; }
.grid .pdf { padding-left: 9px; }
.pdf svg { margin: 0 auto; }
.tri { position: absolute; top: 0; right: 0; border-top: 7px solid #b30000; border-left: 7px solid transparent; }
.prod { color: #3f7fb5; }
.p-ico {
  display: inline-block; width: 14px; height: 14px; border-radius: 50%; background: #3a7fb8; color: #fff;
  font-size: 10px; font-weight: 700; line-height: 14px; text-align: center; margin-right: 4px; vertical-align: 1px;
}
.hscroll { height: 10px; flex: none; background: #fff; padding-top: 1px; border-bottom: 1px solid #e4e4e4; }
.hthumb { display: block; height: 7px; width: 1811px; background: #bdbdbd; border-radius: 4px; }
.vscroll { width: 10px; flex: none; background: #e4e4e4; margin-bottom: 10px; display: flex; flex-direction: column; }
.vhead { height: 49px; background: #efefef; flex: none; }
.vthumb { height: 80px; background: #bdbdbd; flex: none; border-radius: 4px; }
.footer {
  height: 27px; flex: none; background: #f7f7f7; font-size: 11.600px; color: #5f6a76; text-align: right; line-height: 26px; padding-right: 7px;
}

/* chat */
.chat {
  position: absolute; left: 20px; top: 883px; width: 66px; height: 66px; border-radius: 50%; background: #f98a2c;
  display: flex; align-items: center; justify-content: center; z-index: 3; padding-top: 3px;
}
.chat-b {
  position: absolute; left: 45px; top: -2px; width: 24px; height: 24px; border-radius: 50%; background: #d32a2a; color: #fff;
  font-size: 12px; font-weight: 700; line-height: 24px; text-align: center;
}
```
